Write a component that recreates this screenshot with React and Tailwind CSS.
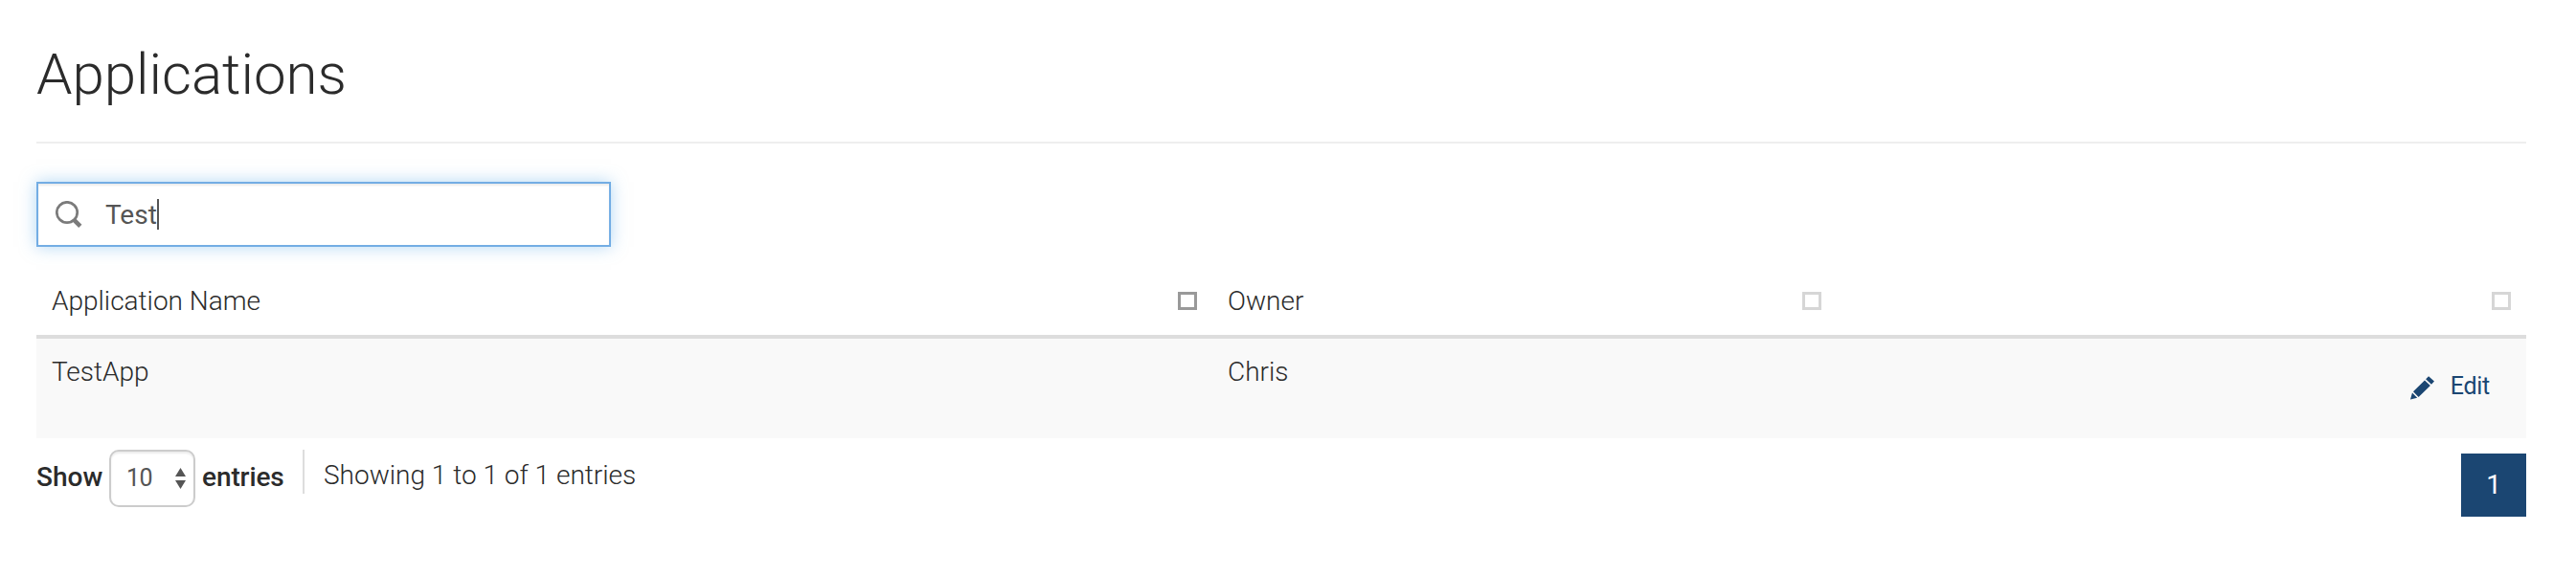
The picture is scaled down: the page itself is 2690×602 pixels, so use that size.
function SortMark({ active = false }) {
  return (
    <span
      className={`block h-[19px] w-[20px] border-[3px] ${active ? "border-[#999999]" : "border-[#d6d6d6]"}`}
    />
  );
}

function SearchIcon() {
  return (
    <svg className="h-[28px] w-[28px] text-[#7b7b7b]" viewBox="0 0 28 28" fill="none" stroke="currentColor">
      <circle cx="12" cy="12" r="10.7" strokeWidth="2.7" />
      <path d="M18.8 19.3l7 7" strokeWidth="4.6" />
    </svg>
  );
}

function PencilIcon() {
  return (
    <svg className="h-[25px] w-[25px]" viewBox="0 0 25 25" fill="currentColor">
      <path d="M19.1 0.2L25 5.6L22 8.8L16.1 3.2ZM15 4.4L20.9 10L8.6 21.9L3 16.3ZM2 17.5L7.2 22.8L0 24.5Z" />
    </svg>
  );
}

export default function App() {
  return (
    <div className="h-[602px] w-[2690px] overflow-hidden bg-white pl-[38px] pr-[52px] font-['Roboto',sans-serif] text-[28px] font-light leading-[40px] text-[#2b2b2b]">
      <h1 className="flex h-[150px] items-start border-b-2 border-[#eeeeee] pt-[38px] text-[60px] font-light leading-[80px]">
        Applications
      </h1>

      <div className="mt-[40px] flex h-[68px] w-[600px] items-center border-2 border-[#73ade4] bg-white pl-[18px] font-normal text-[#555555] shadow-[inset_0_2px_2px_rgba(0,0,0,0.075),0_0_16px_rgba(102,175,233,0.5)]">
        <SearchIcon />
        <span className="ml-[24px] pt-[1px]">Test</span>
        <span className="h-[32px] w-[2px] bg-[#555555]" />
      </div>

      <div className="mt-[36px] grid h-[60px] grid-cols-[1228px_652px_720px] border-b-4 border-[#dddddd]">
        <div className="flex items-start justify-between px-[16px]">
          <span className="pt-[1px]">Application Name</span>
          <span className="pt-[11px]"><SortMark active /></span>
        </div>
        <div className="flex items-start justify-between px-[16px]">
          <span className="pt-[1px]">Owner</span>
          <span className="pt-[11px]"><SortMark /></span>
        </div>
        <div className="flex items-start justify-end pr-[16px] pt-[11px]">
          <SortMark />
        </div>
      </div>

      <div className="grid h-[104px] grid-cols-[1228px_652px_720px] bg-[#f9f9f9] pt-[15px]">
        <div className="pl-[16px]">TestApp</div>
        <div className="pl-[16px]">Chris</div>
        <div className="flex h-[48px] items-center justify-end pr-[38px] pt-[24px] text-[25px] font-normal text-[#1b4672]">
          <PencilIcon />
          <span className="ml-[17px] -mt-[2px] tracking-[-0.3px]">Edit</span>
        </div>
      </div>

      <div className="flex items-start justify-between pt-[12px]">
        <div className="flex items-start">
          <span className="w-[68px] pt-[9px] font-medium">Show</span>
          <div className="ml-[8px] flex h-[60px] w-[90px] items-center justify-between rounded-[10px] border-2 border-[#cccccc] bg-white pl-[16px] pr-[8px] text-[25px] font-normal text-[#555555] shadow-[inset_0_2px_2px_rgba(0,0,0,0.075)]">
            <span className="-mt-[1px] tracking-[-0.5px]">10</span>
            <svg className="h-[22px] w-[11px]" viewBox="0 0 11 22" fill="#555555">
              <path d="M5.5 0L11 9H0ZM0 13H11L5.5 22Z" />
            </svg>
          </div>
          <span className="ml-[7px] w-[86px] pt-[9px] font-medium tracking-[-0.1px]">entries</span>
          <span className="ml-[19px] h-[46px] w-[2px] bg-[#dddddd]" />
          <span className="ml-[20px] pt-[7px]">Showing 1 to 1 of 1 entries</span>
        </div>
        <div className="mt-[4px] flex h-[66px] w-[68px] items-center justify-center bg-[#1b4672] font-normal text-white">
          1
        </div>
      </div>
    </div>
  );
}
